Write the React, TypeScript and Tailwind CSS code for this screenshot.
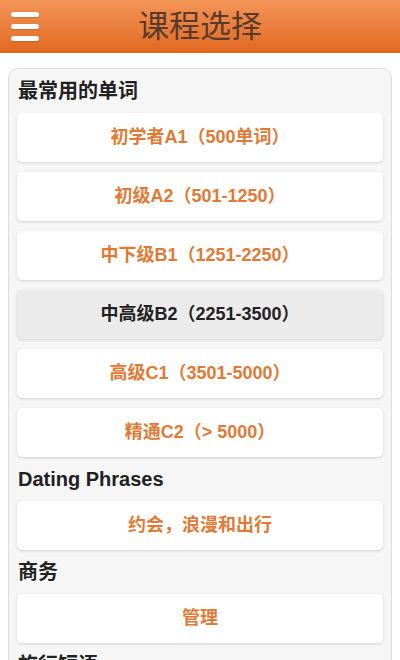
import React from 'react'

const sections = [
  {
    title: '最常用的单词',
    items: [
      '初学者A1（500单词）',
      '初级A2（501-1250）',
      '中下级B1（1251-2250）',
      '中高级B2（2251-3500）',
      '高级C1（3501-5000）',
      '精通C2（> 5000）',
    ],
  },
  { title: 'Dating Phrases', items: ['约会，浪漫和出行'] },
  { title: '商务', items: ['管理'] },
  { title: '旅行短语', items: ['旅行'] },
]

const active = '中高级B2（2251-3500）'

export default function App() {
  return (
    <div
      className="w-[400px] h-[660px] overflow-hidden bg-white"
      style={{ fontFamily: '"Liberation Sans", "Noto Sans CJK SC", sans-serif' }}
    >
      <header className="h-[53px] flex items-center relative bg-gradient-to-b from-[#f39457] to-[#e0681c]">
        <button className="ml-[11px] flex flex-col gap-[7px]">
          <span className="block w-[28px] h-[5px] rounded-full bg-white shadow-[0_1px_1px_rgba(0,0,0,0.15)]" />
          <span className="block w-[28px] h-[5px] rounded-full bg-white shadow-[0_1px_1px_rgba(0,0,0,0.15)]" />
          <span className="block w-[28px] h-[5px] rounded-full bg-white shadow-[0_1px_1px_rgba(0,0,0,0.15)]" />
        </button>
        <h1 className="absolute left-0 right-0 top-[11px] text-center text-[31px] leading-none text-[#5a3a2a] font-normal">
          课程选择
        </h1>
      </header>

      <main className="px-[8px] pt-[15px]">
        <div className="rounded-[10px] border border-[#dcdcdc] bg-[#f6f6f6] px-[8px] pt-[10px] pb-2 flex flex-col gap-[10px]">
          {sections.map((s) => (
            <React.Fragment key={s.title}>
              <h2 className="h-[24px] flex items-center pl-[1px] text-[20px] font-bold text-[#222]">
                {s.title}
              </h2>
              {s.items.map((it) => (
                <div
                  key={it}
                  className={
                    it === active
                      ? 'h-[49px] flex items-center justify-center rounded-[5px] bg-[#ebebeb] text-[#222] text-[18px] font-bold shadow-[0_1px_3px_rgba(0,0,0,0.15)]'
                      : 'h-[49px] flex items-center justify-center rounded-[5px] bg-white text-[#e07a35] text-[18px] font-bold shadow-[0_1px_3px_rgba(0,0,0,0.15)]'
                  }
                >
                  {it}
                </div>
              ))}
            </React.Fragment>
          ))}
        </div>
      </main>
    </div>
  )
}
